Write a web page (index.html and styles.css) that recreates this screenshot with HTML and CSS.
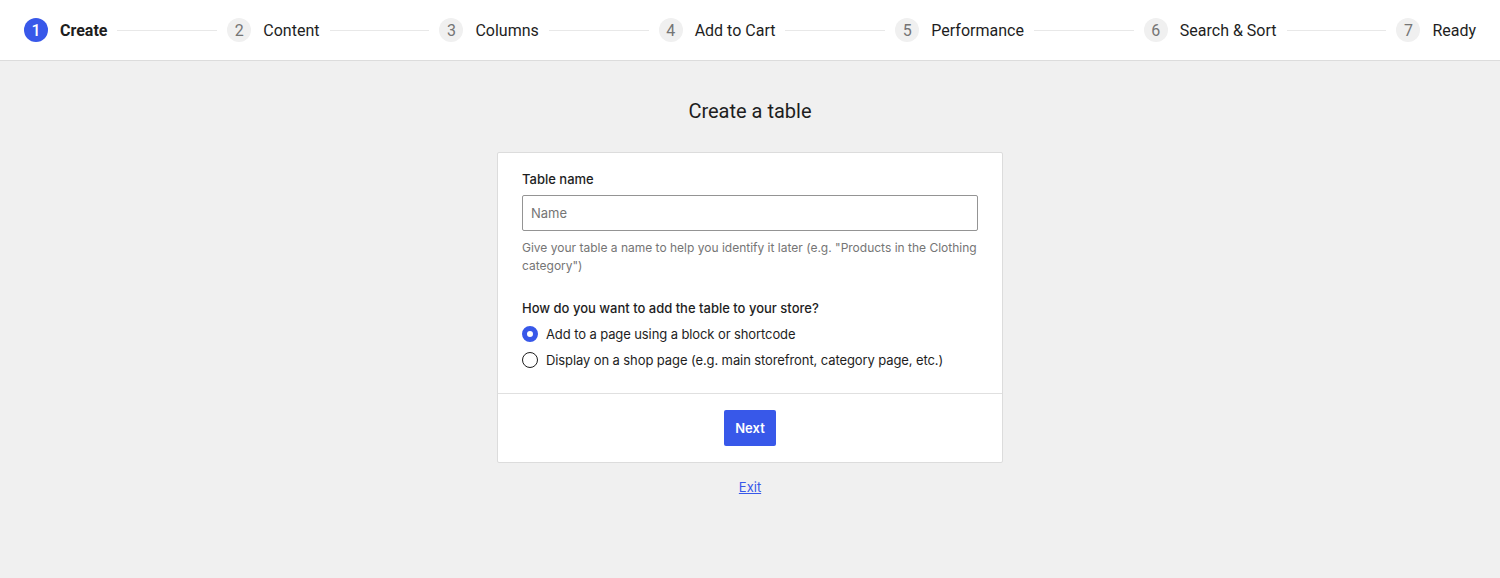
FILE: index.html
```html
<!DOCTYPE html>
<html>

<head>
    <title>Create a table</title>
    <link rel="stylesheet" href="styles.css">
</head>

<body>
    <div class="steps">
        <div class="step active"><span class="num">1</span><span class="label">Create</span></div>
        <div class="line"></div>
        <div class="step"><span class="num">2</span><span class="label">Content</span></div>
        <div class="line"></div>
        <div class="step"><span class="num">3</span><span class="label">Columns</span></div>
        <div class="line"></div>
        <div class="step"><span class="num">4</span><span class="label">Add to Cart</span></div>
        <div class="line"></div>
        <div class="step"><span class="num">5</span><span class="label">Performance</span></div>
        <div class="line"></div>
        <div class="step"><span class="num">6</span><span class="label">Search &amp; Sort</span></div>
        <div class="line"></div>
        <div class="step"><span class="num">7</span><span class="label">Ready</span></div>
    </div>

    <div class="main">
        <h1 class="title">Create a table</h1>

        <div class="card">
            <div class="card-body">
                <label class="field-label" for="table-name">Table name</label>
                <input class="text-input" type="text" id="table-name" placeholder="Name">
                <p class="help">Give your table a name to help you identify it later (e.g. "Products in the Clothing category")</p>

                <div class="question">How do you want to add the table to your store?</div>
                <label class="radio-row"><span class="radio checked"></span>Add to a page using a block or shortcode</label>
                <label class="radio-row"><span class="radio"></span>Display on a shop page (e.g. main storefront, category page, etc.)</label>
            </div>
            <div class="card-footer">
                <button class="btn-next">Next</button>
            </div>
        </div>

        <a class="exit" href="#">Exit</a>
    </div>
</body>

</html>
```

FILE: styles.css
```css
body {
    margin: 0;
    background-color: #f0f0f0;
    font-family: Inter, Roboto, "Liberation Sans", sans-serif;
    color: #1e1e1e;
}

/* step bar */
.steps {
    display: flex;
    align-items: center;
    gap: 10px;
    height: 60px;
    padding: 0 24px;
    background-color: #fff;
    border-bottom: 1px solid #dcdcdc;
    font-family: Roboto, "Liberation Sans", sans-serif;
}

.step {
    display: flex;
    align-items: center;
    gap: 12px;
    font-size: 16px;
    white-space: nowrap;
}

.num {
    width: 24px;
    height: 24px;
    border-radius: 50%;
    background-color: #f0f0f0;
    color: #757575;
    display: flex;
    align-items: center;
    justify-content: center;
    font-size: 16px;
}

.step.active .num {
    background-color: #3858e9;
    color: #fff;
    font-weight: 500;
}

.step.active .label {
    font-weight: 700;
}

.line {
    flex: 1;
    height: 1px;
    background-color: #e8e8e8;
}

/* page body */
.main {
    display: flex;
    flex-direction: column;
    align-items: center;
}

.title {
    margin: 36px 0 27px;
    font-family: Roboto, "Liberation Sans", sans-serif;
    font-size: 20px;
    line-height: 28px;
    font-weight: 400;
}

.card {
    width: 504px;
    background-color: #fff;
    border: 1px solid #dcdcdc;
    border-radius: 2px;
}

.card-body {
    display: flex;
    flex-direction: column;
    padding: 17px 24px 24px;
    border-bottom: 1px solid #e0e0e0;
}

.field-label {
    font-size: 13px;
    line-height: 18px;
    font-weight: 500;
}

.text-input {
    margin-top: 7px;
    height: 36px;
    box-sizing: border-box;
    border: 1px solid #949494;
    border-radius: 2px;
    padding: 0 8px;
    font-family: inherit;
    font-size: 13px;
}

.text-input::placeholder {
    color: #757575;
}

.help {
    margin: 8px 0 24px;
    font-size: 12px;
    line-height: 18px;
    color: #757575;
}

.question {
    font-size: 13px;
    line-height: 18px;
    font-weight: 500;
    margin-bottom: 8px;
}

.radio-row {
    display: flex;
    align-items: center;
    gap: 8px;
    font-size: 13px;
    letter-spacing: -0.1px;
    line-height: 18px;
}

.radio-row + .radio-row {
    margin-top: 8px;
}

.radio {
    width: 16px;
    height: 16px;
    box-sizing: border-box;
    border-radius: 50%;
    border: 1px solid #1e1e1e;
}

.radio.checked {
    border: 5px solid #3858e9;
}

.card-footer {
    display: flex;
    justify-content: center;
    padding: 16px;
}

.btn-next {
    height: 36px;
    padding: 0 11px;
    border: none;
    border-radius: 2px;
    background-color: #3858e9;
    color: #fff;
    font-family: inherit;
    font-size: 13px;
    font-weight: 600;
}

.exit {
    margin-top: 15px;
    font-size: 13px;
    line-height: 18px;
    color: #3858e9;
}
```
